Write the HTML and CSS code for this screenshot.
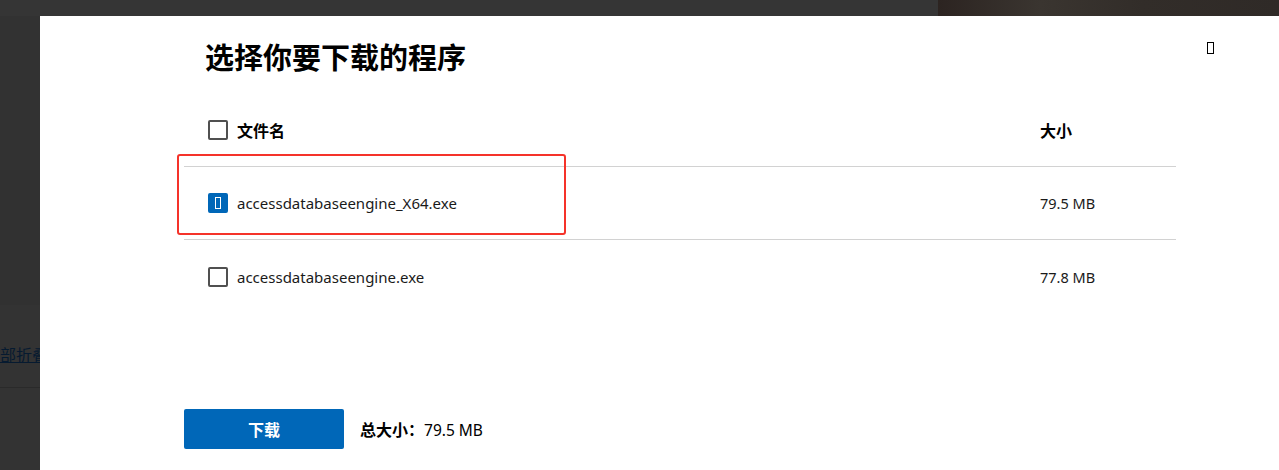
FILE: index.html
```html
<!DOCTYPE html>
<html lang="zh">
<head>
<meta charset="utf-8">
<link rel="stylesheet" href="styles.css">
</head>
<body>
<div class="page">
  <div class="topbar">
    <div class="top-left"></div>
    <div class="top-img"></div>
  </div>
  <div class="main">
    <div class="side">
      <div class="band b1"></div>
      <div class="band b2"></div>
      <div class="band b3"></div>
      <div class="band b4"><span class="side-link">部折叠</span></div>
      <div class="band b5"></div>
    </div>
    <div class="modal">
      <div class="content">
        <div class="title-row">
          <h1 class="title">选择你要下载的程序</h1>
          <span class="close"><span class="tofu"></span></span>
        </div>
        <div class="table">
          <div class="row head">
            <span class="cell-name"><span class="cb"></span><span class="hname">文件名</span></span>
            <span class="cell-size hsize">大小</span>
          </div>
          <div class="row item selected">
            <span class="cell-name"><span class="cb checked"><span class="tofu w"></span></span><span class="fname">accessdatabaseengine_X64.exe</span></span>
            <span class="cell-size">79.5 MB</span>
            <span class="highlight"></span>
          </div>
          <div class="row item last">
            <span class="cell-name"><span class="cb"></span><span class="fname">accessdatabaseengine.exe</span></span>
            <span class="cell-size">77.8 MB</span>
          </div>
        </div>
        <div class="footer">
          <button class="btn">下载</button>
          <span class="total"><b>总大小：</b>79.5 MB</span>
        </div>
      </div>
    </div>
  </div>
</div>
</body>
</html>
```
FILE: styles.css
```css
html, body {
  margin: 0;
  padding: 0;
  background: #333333;
  font-family: "Noto Sans", "Noto Sans CJK SC", sans-serif;
  color: #000;
}
.page {
  width: 1279px;
  height: 470px;
  display: flex;
  flex-direction: column;
  overflow: hidden;
}
.topbar {
  height: 16px;
  display: flex;
  flex: none;
}
.top-left {
  flex: 1;
  background: #353535;
}
.top-img {
  width: 341px;
  background: linear-gradient(90deg, #2c2421 0%, #3a3530 30%, #322d29 60%, #2f2a27 100%);
}
.main {
  flex: 1;
  display: flex;
}
.side {
  width: 40px;
  flex: none;
  display: flex;
  flex-direction: column;
  overflow: hidden;
}
.band { flex: none; }
.b1 { height: 154px; background: #323232; }
.b2 { height: 135px; background: #313131; }
.b3 { height: 15px; background: #333333; }
.b4 {
  height: 67px;
  background: #333333;
  border-bottom: 1px solid #2a2a2a;
  display: flex;
  align-items: center;
  justify-content: flex-end;
}
.b5 { flex: 1; background: #333333; }
.side-link {
  font-size: 16px;
  color: #061a30;
  text-decoration: underline;
  white-space: nowrap;
  margin-right: -8px;
  font-family: "Noto Sans CJK SC", sans-serif;
}
.modal {
  flex: 1;
  background: #ffffff;
}
.content {
  margin-left: 144px;
  width: 992px;
  display: flex;
  flex-direction: column;
}
.title-row {
  display: flex;
  align-items: flex-start;
  justify-content: space-between;
  padding: 20px 0 0 21px;
  height: 57px;
}
.title {
  margin: 0;
  font-family: "Noto Sans CJK SC", sans-serif;
  font-size: 29px;
  line-height: 40px;
  font-weight: 700;
}
.close {
  margin-top: 6px;
  margin-right: -44px;
  width: 20px;
  display: flex;
  justify-content: center;
}
.tofu {
  display: block;
  width: 5px;
  height: 10px;
  border: 1.5px solid #000;
}
.table {
  display: flex;
  flex-direction: column;
}
.row {
  position: relative;
  display: flex;
  align-items: center;
  height: 73px;
  padding-left: 24px;
  border-bottom: 1px solid #d2d2d2;
  box-sizing: border-box;
}
.row.head { height: 74px; }
.row.last { border-bottom: none; }
.cell-name {
  display: flex;
  align-items: center;
  width: 832px;
}
.cell-size {
  font-size: 14.5px;
  color: #1a1a1a;
}
.cb {
  width: 20px;
  height: 20px;
  box-sizing: border-box;
  border: 2px solid #505050;
  border-radius: 2px;
  margin-right: 9px;
  display: flex;
  align-items: center;
  justify-content: center;
  flex: none;
}
.cb.checked {
  background: #0067b8;
  border-color: #0067b8;
}
.tofu.w {
  border-color: #fff;
  width: 4px;
  height: 10px;
}
.hname, .hsize {
  font-family: "Noto Sans CJK SC", sans-serif;
  font-weight: 700;
  font-size: 16px;
  color: #000;
}
.fname {
  font-size: 15px;
  color: #1a1a1a;
}
.highlight {
  position: absolute;
  left: -7px;
  top: -13px;
  width: 389px;
  height: 81px;
  box-sizing: border-box;
  border: 2px solid #f5332a;
  border-radius: 3px;
  pointer-events: none;
}
.footer {
  margin-top: 96px;
  display: flex;
  align-items: center;
}
.btn {
  width: 160px;
  height: 40px;
  background: #0067b8;
  color: #fff;
  border: none;
  border-radius: 2px;
  font-family: "Noto Sans CJK SC", sans-serif;
  font-weight: 700;
  font-size: 16px;
  padding: 0;
}
.total {
  margin-left: 16px;
  font-size: 15.5px;
  color: #000;
  font-family: "Noto Sans", "Noto Sans CJK SC", sans-serif;
}
.total b {
  font-family: "Noto Sans CJK SC", sans-serif;
  font-weight: 700;
  font-size: 16px;
}
```
